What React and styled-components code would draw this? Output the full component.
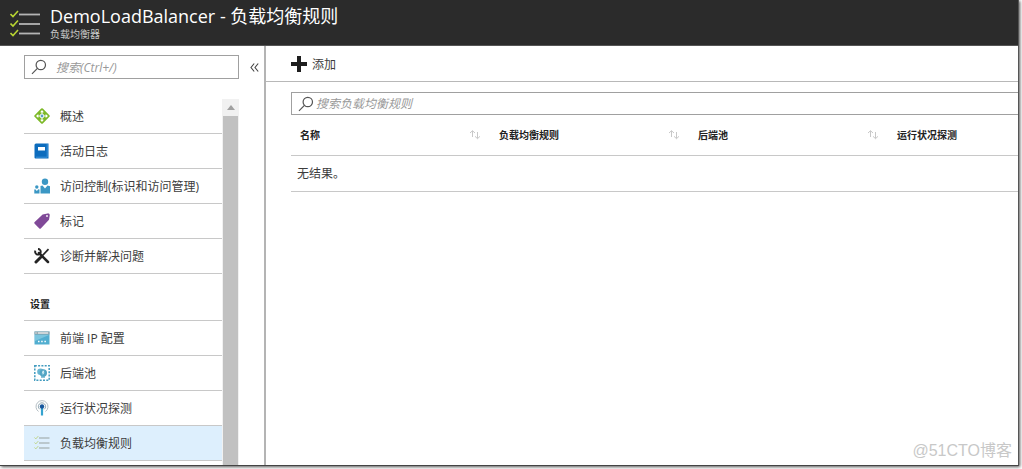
import { useState } from 'react';
import styled, { createGlobalStyle } from 'styled-components';

const GlobalStyle = createGlobalStyle`
    * {
        box-sizing: border-box;
    }
    body {
        margin: 0;
        background: #fff;
        color: #3c3c3c;
        font-family: 'Open Sans', 'Noto Sans CJK SC', sans-serif;
        font-size: 12px;
    }
    button, input {
        font: inherit;
        color: inherit;
    }
`;

const Page = styled.div`
    height: 100vh;
    padding: 0 3px 3px 0;
`;
const Blade = styled.div`
    position: relative;
    display: flex;
    flex-direction: column;
    height: 100%;
    overflow: hidden;
    background: #fff;
    border-right: 1px solid #555;
    border-bottom: 1px solid #444;
    box-shadow: 1px 1px 3px #555;
`;
const Header = styled.header`
    display: flex;
    flex: none;
    gap: 10px;
    height: 46px;
    padding: 0 10px;
    background: #2b2b2b;
    border-bottom: 1px solid #555;
    color: #fff;

    svg {
        margin-top: 10px;
    }
`;
const Title = styled.h1`
    margin: 4px 0 0;
    font-size: 18px;
    line-height: 24px;
    font-weight: 400;
`;
const Subtitle = styled.div`
    color: #c8c8c8;
    font-size: 10px;
    line-height: 12px;
`;
const Body = styled.div`
    display: flex;
    flex: 1;
    min-height: 0;
`;
const Sidebar = styled.aside`
    display: flex;
    flex: none;
    flex-direction: column;
    width: 266px;
    padding: 9px 0 0 24px;
    border-right: 2px solid #b4b4b4;
`;
const SearchRow = styled.div`
    display: flex;
    align-items: center;
    gap: 8px;
`;
const SearchBox = styled.label`
    display: flex;
    align-items: center;
    gap: ${props => props.$gap};
    width: ${props => props.$width || 'auto'};
    height: ${props => props.$height};
    padding: 0 6px;
    border: 1px solid #a0a0a0;
    ${props => props.$open && 'border-right: 0;'}

    svg {
        flex: none;
    }
`;
const SearchInput = styled.input`
    flex: 1;
    min-width: 0;
    padding: 0;
    border: 0;
    outline: 0;
    background: none;
    font-style: italic;

    &::placeholder {
        color: #999;
        opacity: 1;
    }
`;
const CollapseButton = styled.button`
    display: flex;
    padding: 4px 3px;
    border: 0;
    background: none;
`;
const MenuArea = styled.div`
    display: flex;
    flex: 1;
    width: 215px;
    min-height: 0;
    margin-top: 20px;
`;
const Menu = styled.nav`
    flex: 1;
    overflow: hidden;
`;
const MenuItem = styled.a`
    display: flex;
    align-items: center;
    gap: 10px;
    height: 35px;
    padding: 0 0 0 10px;
    border-bottom: 1px solid #c8c8c8;
    background: ${props => (props.$active ? '#ddeffd' : 'transparent')};
    color: inherit;
    text-decoration: none;
`;
const GroupTitle = styled.h2`
    height: 47px;
    margin: 0;
    padding-left: 6px;
    border-bottom: 1px solid #c8c8c8;
    color: #222;
    font-size: 10px;
    line-height: 61px;
`;
const ScrollTrack = styled.div`
    display: flex;
    flex-direction: column;
    width: 17px;
    padding: 0 1px;
    background: #f1f1f1;
`;
const ScrollArrow = styled.div`
    display: flex;
    align-items: center;
    justify-content: center;
    height: 17px;
`;
const ScrollThumb = styled.div`
    flex: 1;
    background: #c1c1c1;
`;
const Main = styled.main`
    flex: 1;
    min-width: 0;
`;
const Toolbar = styled.div`
    display: flex;
    align-items: center;
    height: 36px;
    padding-left: 25px;
    border-bottom: 1px solid #b8b8b8;
`;
const AddButton = styled.button`
    display: flex;
    align-items: center;
    gap: 5px;
    padding: 0;
    border: 0;
    background: none;
`;
const Content = styled.section`
    padding: 10px 0 0 25px;
`;
const Table = styled.table`
    width: 100%;
    border-collapse: collapse;
    table-layout: fixed;
`;
const HeadCell = styled.th`
    width: ${props => (props.$last ? 'auto' : '199px')};
    height: 40px;
    padding: 0 9px;
    border-bottom: 1px solid #c8c8c8;
    color: #222;
    font-size: 10px;
    text-align: left;
`;
const HeadLabel = styled.div`
    display: flex;
    align-items: center;
    justify-content: space-between;
`;
const EmptyCell = styled.td`
    height: 36px;
    padding: 0 6px;
    border-bottom: 1px solid #c8c8c8;
`;
const Watermark = styled.div`
    position: absolute;
    right: 6px;
    bottom: 4px;
    color: #c8c8c8;
    font-family: 'Liberation Sans', 'Noto Sans CJK SC', sans-serif;
    font-size: 16px;
    line-height: 20px;
`;

const RulesIcon = () => (
    <svg width="30" height="27" viewBox="0 0 30 27" fill="none">
        {[0, 9.5, 19].map(y => (
            <g key={y}>
                <path d={`M0.5 ${y + 4}l2.5 2.6 5-5.6`} stroke="#b8d432" strokeWidth="1.6" />
                <path d={`M9 ${y + 4.5}h21`} stroke="#b4b4b4" strokeWidth="1.8" />
            </g>
        ))}
    </svg>
);
const SearchIcon = () => (
    <svg width="16" height="16" viewBox="0 0 16 16" fill="none" stroke="#555" strokeWidth="1.2">
        <circle cx="9.8" cy="6" r="4.7" />
        <path d="M6.4 9.4L1 14.8" />
    </svg>
);
const CollapseIcon = () => (
    <svg width="9" height="9" viewBox="0 0 9 9" fill="none" stroke="#444" strokeWidth="1.1">
        <path d="M4.2 0.5L1 4.5l3.2 4M8.2 0.5L5 4.5l3.2 4" />
    </svg>
);
const PlusIcon = () => (
    <svg width="16" height="16" viewBox="0 0 16 16">
        <path d="M6 0h4v6h6v4h-6v6H6v-6H0V6h6z" fill="#1e1e1e" />
    </svg>
);
const SortIcon = () => (
    <svg width="12" height="10" viewBox="0 0 12 10" fill="none" stroke="#c8c8c8">
        <path d="M3.5 7V0.8M1 3l2.5-2.3L6 3" />
        <path d="M8.5 2v6.5M6 6.3l2.5 2.4L11 6.3" />
    </svg>
);
const OverviewIcon = () => (
    <svg width="16" height="16" viewBox="0 0 16 16">
        <path d="M7.2 0.6a1.1 1.1 0 0 1 1.6 0l6.6 6.6a1.1 1.1 0 0 1 0 1.6l-6.6 6.6a1.1 1.1 0 0 1-1.6 0L0.6 8.8a1.1 1.1 0 0 1 0-1.6z" fill="#7db928" />
        <path d="M8 3v10M3 8h10" stroke="#fff" strokeWidth="1.1" />
        <path d="M8 2l1.9 2.3H6.1zM8 14l1.9-2.3H6.1zM2 8l2.3-1.9v3.8zM14 8l-2.3-1.9v3.8z" fill="#fff" />
        <circle cx="8" cy="8" r="2.2" fill="#fff" />
        <circle cx="8" cy="8" r="1.4" fill="#5b9fc4" />
    </svg>
);
const LogIcon = () => (
    <svg width="16" height="16" viewBox="0 0 16 16">
        <path d="M2 0.5h12.5v15H1.5a1 1 0 0 1-1-1V2A1.5 1.5 0 0 1 2 0.5z" fill="#0c6cbd" />
        <path d="M13.2 1v13.2H2" stroke="#3b93d8" fill="none" />
        <rect x="4" y="4" width="7" height="3.5" fill="#fff" />
    </svg>
);
const AccessIcon = () => (
    <svg width="16" height="16" viewBox="0 0 16 16" fill="#3b97c4">
        <circle cx="11" cy="3.7" r="3.2" />
        <path d="M6.5 15.5V8l2-0.6L11 10.5l2.5-3.1 2.5 0.8v7.3z" />
        <circle cx="2.8" cy="9" r="1.7" />
        <path d="M0.3 15.5v-4l1-0.2 1.5 1.7 1.6-1.7 1.1 0.2v4z" />
    </svg>
);
const TagIcon = () => (
    <svg width="16" height="16" viewBox="0 0 16 16">
        <path d="M8.6 1.4l5-1a1.8 1.8 0 0 1 2.1 2L15 6.8 7 15.2a1.3 1.3 0 0 1-1.9 0L0.7 10.8a1.3 1.3 0 0 1 0-1.9z" fill="#804998" />
        <circle cx="13" cy="3" r="0.9" fill="#fff" />
    </svg>
);
const ToolsIcon = () => (
    <svg width="16" height="16" viewBox="0 0 16 16" fill="none" stroke="#242424">
        <path d="M5 5l9 9" strokeWidth="2.5" strokeLinecap="round" />
        <path d="M1.4 2.6A2.8 2.8 0 1 0 4 1" strokeWidth="1.9" />
        <path d="M14.5 1.2L7.5 8.5" strokeWidth="1.7" />
        <path d="M6.5 9.5L2 14" strokeWidth="3" strokeLinecap="round" />
    </svg>
);
const FrontendIcon = () => (
    <svg width="16" height="16" viewBox="0 0 16 16">
        <path d="M0.5 1.5h15v13H0.5z" fill="#52aed0" />
        <path d="M0.5 1.5h15v3H0.5z" fill="#9aaab1" />
        <path d="M1.5 3h1M4 3h10" stroke="#fff" />
        <path d="M1 5h14L1 11z" fill="#7bc5de" />
        <path d="M4 11.5h1.5M7.2 11.5h1.5M10.4 11.5h1.5" stroke="#fff" strokeWidth="1.3" />
    </svg>
);
const PoolIcon = () => (
    <svg width="16" height="16" viewBox="0 0 16 16">
        <rect x="0.8" y="0.8" width="14.4" height="14.4" fill="none" stroke="#419bbf" strokeWidth="1.5" strokeDasharray="2 1.3" />
        <circle cx="6.5" cy="6.8" r="3.3" fill="#69b6d2" />
        <circle cx="9.3" cy="8" r="3.7" fill="#53a5c4" />
        <path d="M8.6 5.8h1.8L9.6 7.6h1L8.4 10.6 9 8.4H7.8z" fill="#d5eef5" />
        <path d="M7 12h4" stroke="#53a5c4" strokeWidth="1.3" />
    </svg>
);
const ProbeIcon = () => (
    <svg width="16" height="16" viewBox="0 0 16 16" fill="none">
        <path d="M4.5 11.5a6 6 0 1 1 7 0" stroke="#b4bec4" />
        <path d="M5.8 9.3a3.6 3.6 0 1 1 4.4 0" stroke="#8ea5b0" />
        <path d="M8 7v8.5" stroke="#35a3cf" strokeWidth="2.2" />
        <circle cx="8" cy="6.5" r="2.2" fill="#17569b" />
    </svg>
);
const ListIcon = () => (
    <svg width="16" height="16" viewBox="0 0 16 16" fill="none">
        {[2.5, 7.5, 12.5].map(y => (
            <g key={y}>
                <path d={`M0.5 ${y}l1.3 1.4 2.5-2.8`} stroke="#bfd58a" />
                <path d={`M5 ${y + 0.5}h10.5`} stroke="#a3adaf" strokeWidth="1.2" />
            </g>
        ))}
    </svg>
);

const generalItems = [
    { label: '概述', icon: OverviewIcon },
    { label: '活动日志', icon: LogIcon },
    { label: '访问控制(标识和访问管理)', icon: AccessIcon },
    { label: '标记', icon: TagIcon },
    { label: '诊断并解决问题', icon: ToolsIcon },
];
const settingItems = [
    { label: '前端 IP 配置', icon: FrontendIcon },
    { label: '后端池', icon: PoolIcon },
    { label: '运行状况探测', icon: ProbeIcon },
    { label: '负载均衡规则', icon: ListIcon },
];
const columns = ['名称', '负载均衡规则', '后端池', '运行状况探测'];

function App() {
    const [active, setActive] = useState('负载均衡规则');

    const renderItem = ({ label, icon: Icon }) => (
        <MenuItem
            key={label}
            href="#"
            $active={label === active}
            onClick={() => setActive(label)}
        >
            <Icon />
            {label}
        </MenuItem>
    );

    return (
        <Page>
            <GlobalStyle />
            <Blade>
                <Header>
                    <RulesIcon />
                    <div>
                        <Title>DemoLoadBalancer - 负载均衡规则</Title>
                        <Subtitle>负载均衡器</Subtitle>
                    </div>
                </Header>
                <Body>
                    <Sidebar>
                        <SearchRow>
                            <SearchBox $width="215px" $height="24px" $gap="9px">
                                <SearchIcon />
                                <SearchInput placeholder="搜索(Ctrl+/)" />
                            </SearchBox>
                            <CollapseButton>
                                <CollapseIcon />
                            </CollapseButton>
                        </SearchRow>
                        <MenuArea>
                            <Menu>
                                {generalItems.map(renderItem)}
                                <GroupTitle>设置</GroupTitle>
                                {settingItems.map(renderItem)}
                            </Menu>
                            <ScrollTrack>
                                <ScrollArrow>
                                    <svg width="8" height="5" viewBox="0 0 8 5">
                                        <path d="M0 5l4-5 4 5z" fill="#a0a0a0" />
                                    </svg>
                                </ScrollArrow>
                                <ScrollThumb />
                            </ScrollTrack>
                        </MenuArea>
                    </Sidebar>
                    <Main>
                        <Toolbar>
                            <AddButton>
                                <PlusIcon />
                                添加
                            </AddButton>
                        </Toolbar>
                        <Content>
                            <SearchBox $height="23px" $gap="2px" $open>
                                <SearchIcon />
                                <SearchInput placeholder="搜索负载均衡规则" />
                            </SearchBox>
                            <Table>
                                <thead>
                                    <tr>
                                        {columns.map((name, i) => (
                                            <HeadCell key={name} $last={i === columns.length - 1}>
                                                <HeadLabel>
                                                    {name}
                                                    {i < columns.length - 1 && <SortIcon />}
                                                </HeadLabel>
                                            </HeadCell>
                                        ))}
                                    </tr>
                                </thead>
                                <tbody>
                                    <tr>
                                        <EmptyCell colSpan={columns.length}>无结果。</EmptyCell>
                                    </tr>
                                </tbody>
                            </Table>
                        </Content>
                    </Main>
                </Body>
                <Watermark>@51CTO博客</Watermark>
            </Blade>
        </Page>
    );
}

export default App;
